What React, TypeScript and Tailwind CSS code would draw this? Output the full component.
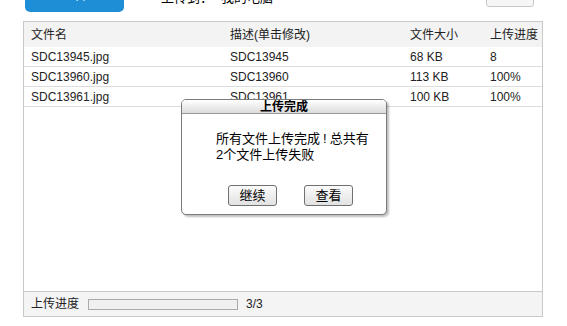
import React from "react";

const font = { fontFamily: '"Liberation Sans", Arial, "Noto Sans CJK SC", sans-serif' };

const rows = [
  ["SDC13945.jpg", "SDC13945", "68 KB", "8"],
  ["SDC13960.jpg", "SDC13960", "113 KB", "100%"],
  ["SDC13961.jpg", "SDC13961", "100 KB", "100%"],
];

export default function App() {
  return (
    <div
      className="relative w-[567px] h-[326px] overflow-hidden bg-white text-[12px] text-[#222]"
      style={font}
    >
      {/* top bar, mostly scrolled out of view */}
      <div className="flex items-end h-[12px]">
        <div className="ml-[25px] w-[99px] h-[30px] shrink-0 rounded-[5px] bg-[#1e8fd6] text-white flex items-start justify-center pt-[6px] text-[13px] leading-[13px]">
          上传
        </div>
        <div className="ml-[37px] flex gap-[8px] mb-[8px] text-[13px] leading-[13px] text-black">
          <span>上传到：</span>
          <span>我的电脑</span>
        </div>
        <div className="ml-auto mr-[33px] mb-[5px] w-[48px] h-[30px] shrink-0 rounded-[3px] border border-[#c8c8c8] bg-[#f6f6f6] text-[#999] flex items-end justify-center pb-[5px] leading-[12px]">
          浏览
        </div>
      </div>

      {/* main panel */}
      <div className="ml-[23px] mt-[9px] w-[520px] h-[296px] border border-[#c9c9c9] flex flex-col">
        <div className="grid grid-cols-[199px_180px_80px_1fr] h-[25px] items-center bg-[#f3f3f3]">
          <div className="pl-[7px]">文件名</div>
          <div className="pl-[7px]">描述(单击修改)</div>
          <div className="pl-[7px]">文件大小</div>
          <div className="pl-[7px]">上传进度</div>
        </div>
        {rows.map((r) => (
          <div
            key={r[0]}
            className="grid grid-cols-[199px_180px_80px_1fr] h-[20px] items-center border-b border-[#dcdcdc] box-border"
          >
            <div className="pl-[7px]">{r[0]}</div>
            <div className="pl-[7px]">{r[1]}</div>
            <div className="pl-[7px]">{r[2]}</div>
            <div className="pl-[7px]">{r[3]}</div>
          </div>
        ))}
        <div className="flex-1" />
        <div className="h-[25px] border-t border-[#c9c9c9] bg-[#f4f4f4] flex items-center">
          <span className="pl-[7px]">上传进度</span>
          <div className="ml-[9px] w-[150px] h-[11px] border border-[#aaa] bg-[#f0f0f0]" />
          <span className="ml-[8px]">3/3</span>
        </div>
      </div>

      {/* dialog */}
      <div className="absolute left-[181px] top-[99px] w-[206px] h-[116px] rounded-[5px] border border-[#7a7a7a] bg-white shadow-[2px_2px_2px_rgba(0,0,0,0.25)] flex flex-col overflow-hidden">
        <div className="h-[14px] border-b border-[#9a9a9a] bg-gradient-to-b from-[#ffffff] to-[#dcdcdc] flex items-center justify-center font-bold text-[12px] text-black leading-[14px]">
          上传完成
        </div>
        <div className="pl-[34px] pt-[17px] text-[13px] leading-[16px] text-black">
          <div>
            所有文件上传完成<span className="mx-[3px]">!</span>总共有
          </div>
          <div>2个文件上传失败</div>
        </div>
        <div className="flex gap-[27px] pl-[46px] mt-[22px]">
          <button className="w-[49px] h-[21px] rounded-[3px] border border-[#707070] bg-gradient-to-b from-[#fbfbfb] to-[#e2e2e2] text-[13px] text-black flex items-center justify-center">
            继续
          </button>
          <button className="w-[49px] h-[21px] rounded-[3px] border border-[#707070] bg-gradient-to-b from-[#fbfbfb] to-[#e2e2e2] text-[13px] text-black flex items-center justify-center">
            查看
          </button>
        </div>
      </div>
    </div>
  );
}
